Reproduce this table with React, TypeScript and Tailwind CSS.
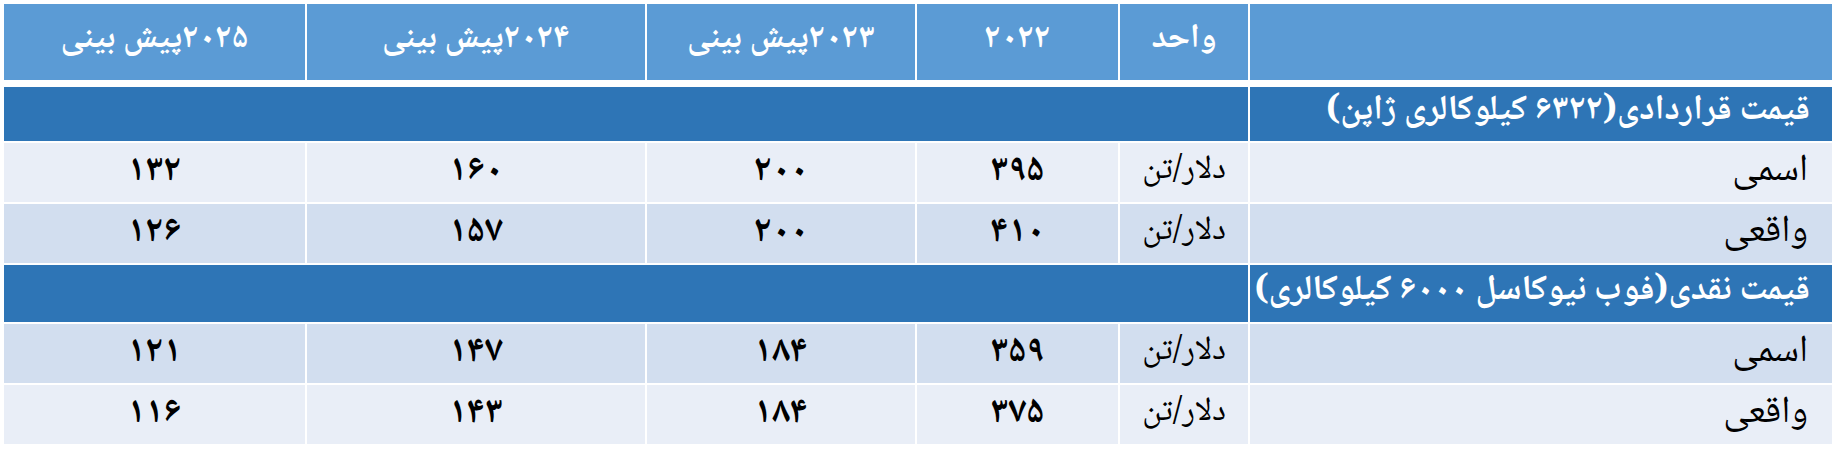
import React from 'react';

interface DataRow {
  label: string;
  unit: string;
  values: string[]; // 2022, 2023, 2024, 2025
  shade: 'light' | 'mid';
}

interface Section {
  title: string;
  rows: DataRow[];
}

const headers = ['واحد', '۲۰۲۲', '۲۰۲۳پیش بینی', '۲۰۲۴پیش بینی', '۲۰۲۵پیش بینی'];

const sections: Section[] = [
  {
    title: 'قیمت قراردادی(۶۳۲۲ کیلوکالری ژاپن)',
    rows: [
      { label: 'اسمی', unit: 'دلار/تن', values: ['۳۹۵', '۲۰۰', '۱۶۰', '۱۳۲'], shade: 'light' },
      { label: 'واقعی', unit: 'دلار/تن', values: ['۴۱۰', '۲۰۰', '۱۵۷', '۱۲۶'], shade: 'mid' },
    ],
  },
  {
    title: 'قیمت نقدی(فوب نیوکاسل ۶۰۰۰ کیلوکالری)',
    rows: [
      { label: 'اسمی', unit: 'دلار/تن', values: ['۳۵۹', '۱۸۴', '۱۴۷', '۱۲۱'], shade: 'mid' },
      { label: 'واقعی', unit: 'دلار/تن', values: ['۳۷۵', '۱۸۴', '۱۴۳', '۱۱۶'], shade: 'light' },
    ],
  },
];

const App: React.FC = () => {
  return (
    <div className="bg-white p-[2px] font-[family-name:'Noto_Naskh_Arabic','Noto_Sans_Arabic','DejaVu_Sans',sans-serif]">
      <table dir="rtl" className="w-[1830px] table-fixed border-collapse leading-none">
        <colgroup>
          <col className="w-[584px]" />
          <col className="w-[130px]" />
          <col className="w-[203px]" />
          <col className="w-[270px]" />
          <col className="w-[340px]" />
          <col className="w-[303px]" />
        </colgroup>
        <thead>
          <tr className="h-[80px]">
            <th className="border-2 border-b-[7px] border-white bg-[#5b9bd5]" />
            {headers.map((h) => (
              <th
                key={h}
                className="border-2 border-b-[7px] border-white bg-[#5b9bd5] pb-[4px] text-center text-[34px] font-bold text-white"
              >
                {h}
              </th>
            ))}
          </tr>
        </thead>
        <tbody>
          {sections.map((section) => (
            <React.Fragment key={section.title}>
              {/* Section title row */}
              <tr className="h-[59px]">
                <td className="border-2 border-white bg-[#2e75b6] pr-[22px] pb-[4px] text-right text-[35px] font-bold text-white whitespace-nowrap">
                  {section.title}
                </td>
                <td colSpan={5} className="border-2 border-white bg-[#2e75b6]" />
              </tr>

              {section.rows.map((row) => {
                const bg = row.shade === 'light' ? 'bg-[#e9eef7]' : 'bg-[#d2deef]';
                return (
                  <tr key={section.title + row.label} className="h-[61px]">
                    <td className={`border-2 border-white ${bg} pr-[24px] pb-[2px] text-right text-[38px] text-black`}>
                      {row.label}
                    </td>
                    <td className={`border-2 border-white ${bg} pb-[2px] text-center text-[33px] text-black`}>
                      {row.unit}
                    </td>
                    {row.values.map((v, i) => (
                      <td
                        key={i}
                        className={`border-2 border-white ${bg} pb-[2px] text-center text-[37px] font-bold text-black`}
                      >
                        {v}
                      </td>
                    ))}
                  </tr>
                );
              })}
            </React.Fragment>
          ))}
        </tbody>
      </table>
    </div>
  );
};

export default App;
